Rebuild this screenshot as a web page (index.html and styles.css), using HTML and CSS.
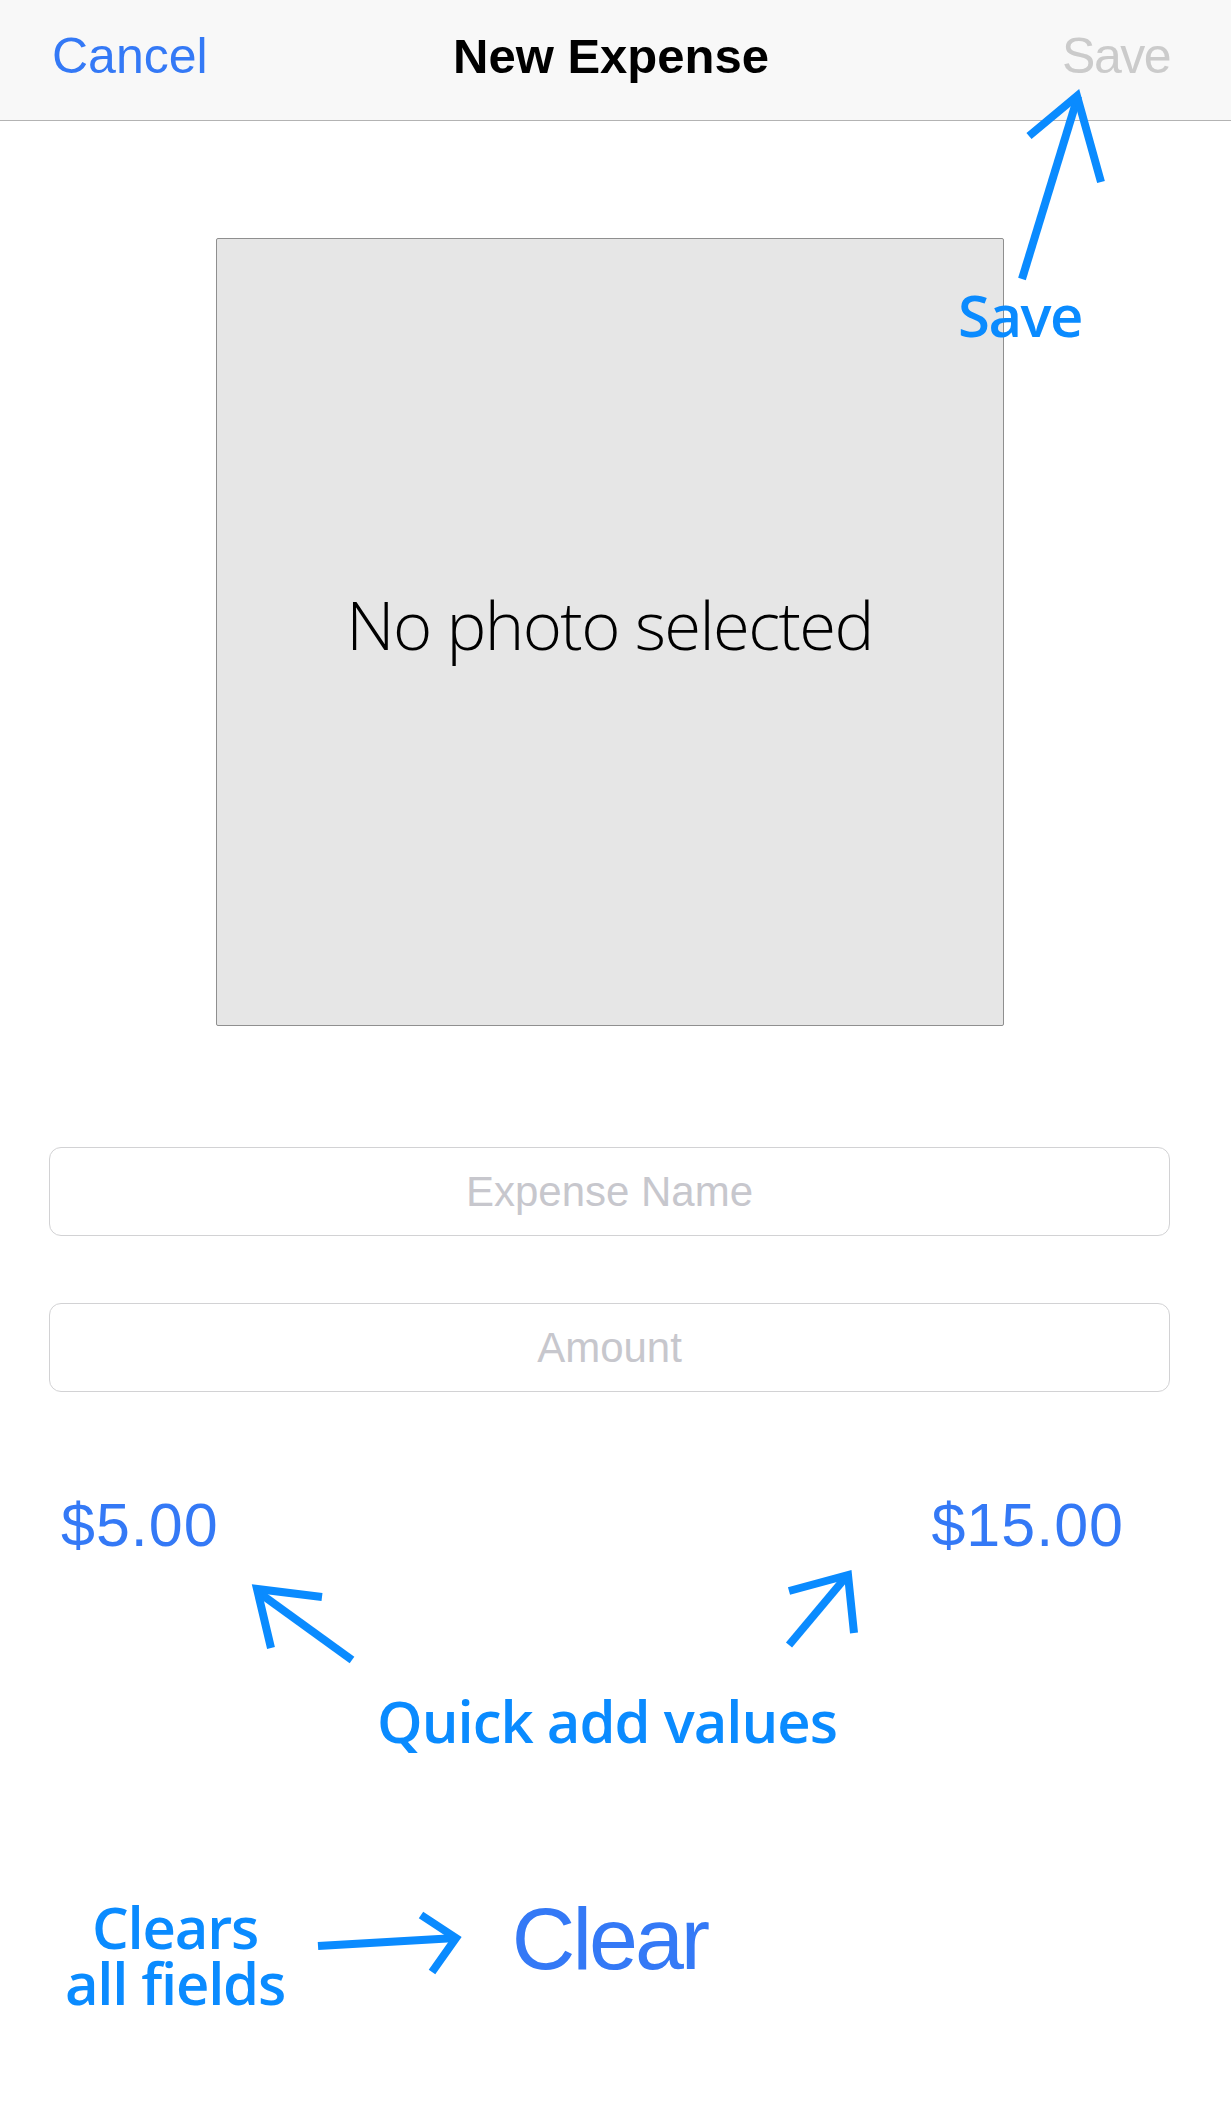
FILE: index.html
```html
<!DOCTYPE html>
<html lang="en">
<head>
<meta charset="utf-8">
<title>New Expense</title>
<link rel="stylesheet" href="styles.css">
</head>
<body>
<div class="screen">
  <header class="navbar">
    <span class="nav-btn nav-cancel">Cancel</span>
    <h1 class="nav-title">New Expense</h1>
    <span class="nav-btn nav-save">Save</span>
  </header>
  <main class="form">
    <div class="photo"><span class="photo-text">No photo selected</span></div>
    <input class="field field-name" type="text" placeholder="Expense Name">
    <input class="field field-amount" type="text" placeholder="Amount">
    <div class="quick">
      <button class="quick-btn">$5.00</button>
      <button class="quick-btn">$15.00</button>
    </div>
    <button class="clear-btn">Clear</button>
  </main>

  <svg class="arrows" width="1231" height="2128" viewBox="0 0 1231 2128" aria-hidden="true">
    <g fill="none" stroke="#0a8bff" stroke-width="8" stroke-linecap="butt" stroke-linejoin="miter">
      <line x1="1022" y1="279" x2="1078" y2="96"/>
      <polyline points="1029,136 1077,96 1101,182"/>
      <line x1="352" y1="1660" x2="258" y2="1592"/>
      <polyline points="322,1597 257,1589 271,1648"/>
      <line x1="789" y1="1645" x2="846" y2="1577"/>
      <polyline points="789,1591 848,1575 854,1633"/>
      <line x1="318" y1="1946" x2="456" y2="1938"/>
      <polyline points="421,1915 456,1938 432,1972"/>
    </g>
  </svg>
  <div class="note note-save">Save</div>
  <div class="note note-quick">Quick add values</div>
  <div class="note note-clear">
    <div class="note-line">Clears</div>
    <div class="note-line">all fields</div>
  </div>
</div>
</body>
</html>
```

FILE: styles.css
```css
html, body {
  margin: 0;
  padding: 0;
  background: #ffffff;
}

.screen {
  position: relative;
  width: 1231px;
  height: 2128px;
  overflow: hidden;
  font-family: "Liberation Sans", Arial, sans-serif;
}

.navbar {
  box-sizing: border-box;
  height: 121px;
  padding: 0 61px 8px 52px;
  background: #f8f8f8;
  border-bottom: 1px solid #b3b3b3;
  display: grid;
  grid-template-columns: 1fr auto 1fr;
  align-items: center;
}

.nav-btn {
  font-size: 50px;
  line-height: 56px;
}

.nav-cancel {
  color: #3479f6;
  justify-self: start;
}

.nav-save {
  color: #cbcbcb;
  justify-self: end;
  letter-spacing: -1.5px;
}

.nav-title {
  margin: 0;
  font-size: 49px;
  line-height: 56px;
  font-weight: 700;
  color: #000;
}

.form {
  padding: 0 61px 0 49px;
  display: flex;
  flex-direction: column;
}

.photo {
  box-sizing: border-box;
  align-self: center;
  width: 788px;
  height: 788px;
  margin-top: 117px;
  padding-bottom: 16px;
  background: #e6e6e6;
  border: 1px solid #8f8f8f;
  border-radius: 2px;
  display: flex;
  align-items: center;
  justify-content: center;
}

.photo-text {
  font-family: "Open Sans", sans-serif;
  font-weight: 300;
  font-size: 67px;
  color: #000;
  letter-spacing: -1.6px;
}

.field {
  box-sizing: border-box;
  display: block;
  width: 100%;
  height: 89px;
  margin: 0;
  padding: 0 20px;
  border: 1.5px solid #d2d2d4;
  border-radius: 12px;
  background: #fff;
  font-family: "Liberation Sans", Arial, sans-serif;
  font-size: 42px;
  text-align: center;
  color: #000;
  outline: none;
}

.field::placeholder {
  color: #c7c7cd;
}

.field-name {
  margin-top: 121px;
}

.field-amount {
  margin-top: 67px;
}

.quick {
  margin-top: 99px;
  padding: 0 46px 0 12px;
  display: flex;
  justify-content: space-between;
}

.quick-btn,
.clear-btn {
  margin: 0;
  padding: 0;
  border: 0;
  background: none;
  font-family: "Liberation Sans", Arial, sans-serif;
  color: #3479f6;
}

.quick-btn {
  font-size: 61px;
  line-height: 68px;
  letter-spacing: 1px;
}

.clear-btn {
  align-self: center;
  margin-top: 330px;
  font-size: 88px;
  line-height: 100px;
  letter-spacing: -3px;
}

.arrows {
  position: absolute;
  top: 0;
  left: 0;
  pointer-events: none;
}

.note {
  position: absolute;
  font-family: "Open Sans", sans-serif;
  font-weight: 600;
  font-size: 58px;
  line-height: 60px;
  color: #0a8bff;
  white-space: nowrap;
  letter-spacing: -1px;
}

.note-save {
  left: 958px;
  top: 285px;
  letter-spacing: -1.5px;
}

.note-quick {
  left: 377px;
  top: 1691px;
}

.note-clear {
  left: 40px;
  top: 1899px;
  width: 270px;
  text-align: center;
  letter-spacing: -1.2px;
}

.note-line {
  height: 56px;
  line-height: 56px;
}
```
